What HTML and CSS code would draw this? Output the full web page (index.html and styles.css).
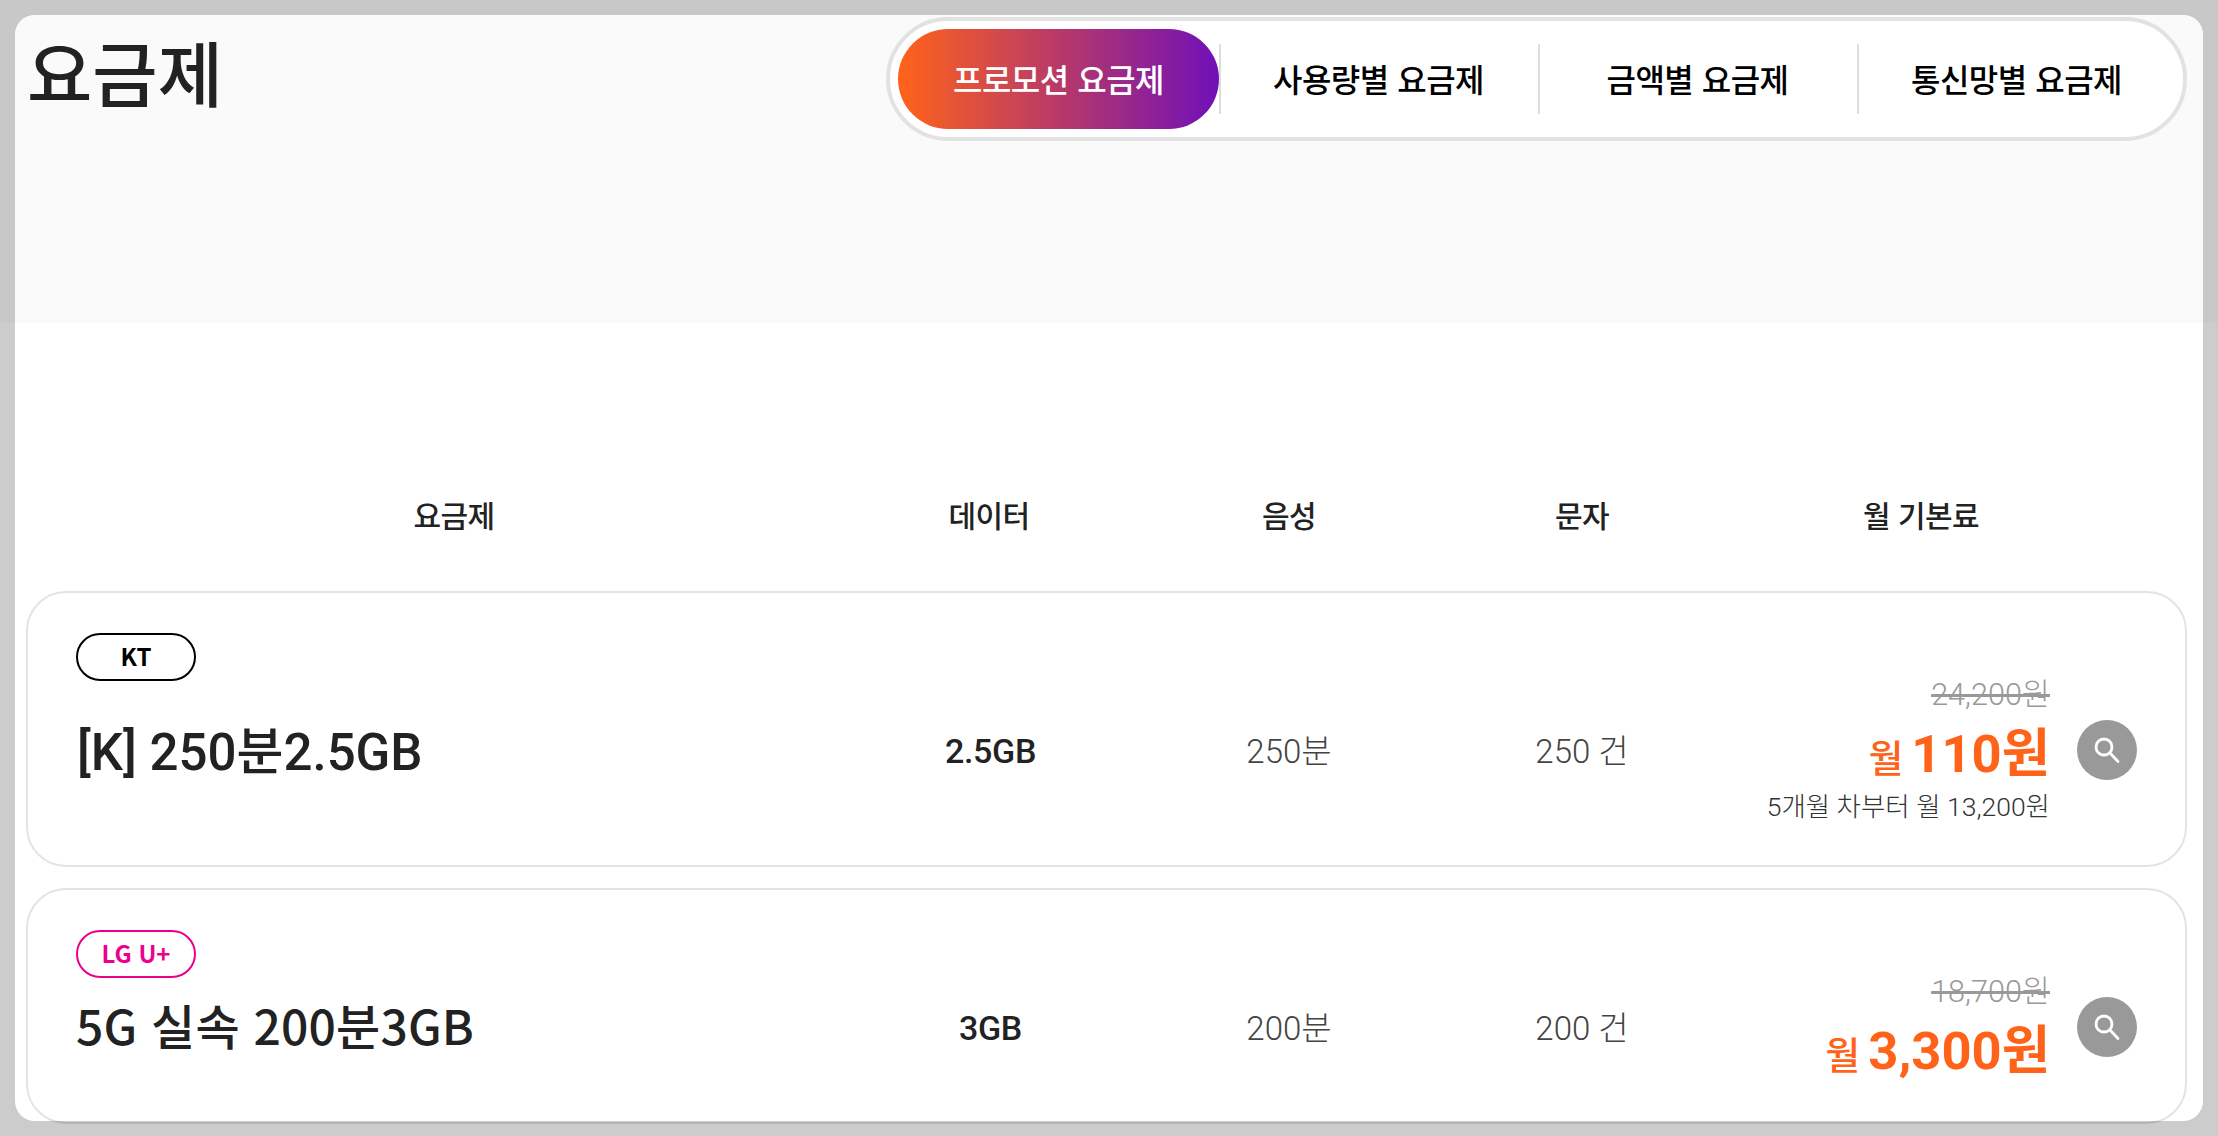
FILE: index.html
```html
<!DOCTYPE html>
<html lang="ko">
<head>
    <meta charset="UTF-8">
    <meta name="viewport" content="width=device-width, initial-scale=1.0">
    <title>요금제</title>
    <link rel="stylesheet" href="styles.css">
</head>
<body>
    <div class="panel">
        <header class="page-head">
            <h1>요금제</h1>
            <nav class="tabs">
                <a href="#" class="tab active">프로모션 요금제</a>
                <a href="#" class="tab">사용량별 요금제</a>
                <a href="#" class="tab">금액별 요금제</a>
                <a href="#" class="tab">통신망별 요금제</a>
            </nav>
        </header>

        <div class="plan-labels plan-grid">
            <span>요금제</span>
            <span>데이터</span>
            <span>음성</span>
            <span>문자</span>
            <span class="label-price">월 기본료</span>
        </div>

        <div class="plan-list">
            <div class="plan-card plan-grid">
                <span class="carrier">KT</span>
                <div class="plan-name plan-name-roboto">[K] 250분2.5GB</div>
                <div class="plan-data">2.5GB</div>
                <div class="plan-value">250분</div>
                <div class="plan-value">250 건</div>
                <div class="plan-price">
                    <div class="price-old">24,200원</div>
                    <div class="price-now"><small>월</small> <b>110원</b></div>
                    <div class="price-note">5개월 차부터 월 13,200원</div>
                </div>
                <a href="#" class="search-btn">
                    <svg viewBox="0 0 60 60" width="60" height="60"><circle cx="27" cy="27" r="8" fill="none" stroke="#fff" stroke-width="2.8"/><path d="M33 33 L41 41.5" stroke="#fff" stroke-width="2.8" stroke-linecap="round"/></svg>
                </a>
            </div>

            <div class="plan-card plan-grid">
                <span class="carrier carrier-lg">LG U+</span>
                <div class="plan-name">5G 실속 200분3GB</div>
                <div class="plan-data">3GB</div>
                <div class="plan-value">200분</div>
                <div class="plan-value">200 건</div>
                <div class="plan-price">
                    <div class="price-old">18,700원</div>
                    <div class="price-now"><small>월</small> <b>3,300원</b></div>
                </div>
                <a href="#" class="search-btn">
                    <svg viewBox="0 0 60 60" width="60" height="60"><circle cx="27" cy="27" r="8" fill="none" stroke="#fff" stroke-width="2.8"/><path d="M33 33 L41 41.5" stroke="#fff" stroke-width="2.8" stroke-linecap="round"/></svg>
                </a>
            </div>
        </div>
    </div>
</body>
</html>
```

FILE: styles.css
```css
* {
    margin: 0;
    padding: 0;
    box-sizing: border-box;
}

html, body {
    height: 100%;
}

body {
    font-family: Roboto, "Noto Sans CJK KR", sans-serif;
    background: linear-gradient(#c8c8c8 0, #c8c8c8 323px, #cccccc 323px);
    padding: 15px;
    color: #222;
    overflow: hidden;
}

a {
    text-decoration: none;
}

.panel {
    height: 1106px;
    background: #fff;
    border-radius: 20px;
}

.page-head {
    height: 308px;
    background: #fafafa;
    border-radius: 20px 20px 0 0;
    display: flex;
    justify-content: space-between;
    align-items: flex-start;
    padding: 2px 16px 0 12px;
}

h1 {
    font-family: "Noto Sans CJK KR", sans-serif;
    font-size: 71px;
    font-weight: 500;
    line-height: 106px;
}

.tabs {
    width: 1301px;
    height: 124px;
    background: #fff;
    border: 4px solid #e2e2e2;
    border-radius: 62px;
    padding: 8px;
    display: flex;
    align-items: center;
}

.tab {
    flex: 0 0 319px;
    height: 100px;
    padding-bottom: 3px;
    display: flex;
    align-items: center;
    justify-content: center;
    font-family: "Noto Sans CJK KR", sans-serif;
    font-size: 32px;
    font-weight: 500;
    letter-spacing: -0.5px;
    color: #000;
    position: relative;
}

.tab.active {
    flex-basis: 321px;
    color: #fff;
    background: linear-gradient(90deg, #ff6319 0%, #7010b8 100%);
    border-radius: 50px;
}

.tab + .tab::before {
    content: "";
    position: absolute;
    left: 0;
    top: 15px;
    height: 70px;
    width: 2px;
    background: #ddd;
}

.plan-grid {
    display: grid;
    grid-template-columns: 756px 314px 286px 300px 318px 87px;
    align-items: center;
    text-align: center;
}

.plan-labels {
    margin: 171px 0 57px 11px;
    padding: 0 50px;
    height: 40px;
    font-family: "Noto Sans CJK KR", sans-serif;
    font-size: 30px;
    font-weight: 500;
    letter-spacing: -0.6px;
    line-height: 40px;
}

.label-price {
    grid-column: 5 / 7;
    padding-right: 27px;
}

.plan-list {
    margin: 0 16px 0 11px;
    display: flex;
    flex-direction: column;
    gap: 21px;
}

.plan-card {
    position: relative;
    padding: 76px 48px 34px;
    border: 2px solid rgba(0, 0, 0, 0.11);
    border-radius: 40px;
}

.carrier {
    position: absolute;
    left: 48px;
    top: 40px;
    width: 120px;
    height: 48px;
    border: 2px solid #000;
    border-radius: 24px;
    font-family: "Noto Sans CJK KR", sans-serif;
    font-size: 24px;
    font-weight: 700;
    line-height: 42px;
    color: #000;
}

.carrier-lg {
    color: #ec008c;
    border-color: #ec008c;
}

.plan-name {
    font-family: "Noto Sans CJK KR", sans-serif;
    font-size: 48px;
    font-weight: 500;
    letter-spacing: 0.2px;
    text-align: left;
    margin-top: -6px;
}

.plan-name-roboto {
    font-family: Roboto, "Noto Sans CJK KR", sans-serif;
    font-size: 51px;
    letter-spacing: 0;
    padding-left: 1px;
    margin-top: -4px;
}

.plan-data {
    font-size: 34px;
    font-weight: 500;
    letter-spacing: -0.3px;
    padding: 2px 0 0 3px;
}

.plan-value {
    font-size: 33px;
    font-weight: 300;
    color: #444;
    margin-top: -2px;
}

.plan-price {
    text-align: right;
}

.price-old {
    height: 48px;
    line-height: 48px;
    padding-top: 2px;
    font-size: 30.6px;
    font-weight: 300;
    color: #999;
    text-decoration: line-through;
}

.price-now {
    height: 74px;
    line-height: 74px;
    color: #ff6319;
    word-spacing: 4px;
}

.price-now small {
    font-size: 38px;
    font-weight: 500;
}

.price-now b {
    font-size: 52.5px;
    font-weight: 700;
}

.price-note {
    height: 30px;
    line-height: 30px;
    margin-bottom: 10px;
    padding-top: 1px;
    font-size: 26.5px;
    font-weight: 300;
    color: #333;
    white-space: nowrap;
}

.search-btn {
    justify-self: end;
    width: 60px;
    height: 60px;
    border-radius: 50%;
    background: #999;
    display: flex;
    align-items: center;
    justify-content: center;
}
```
